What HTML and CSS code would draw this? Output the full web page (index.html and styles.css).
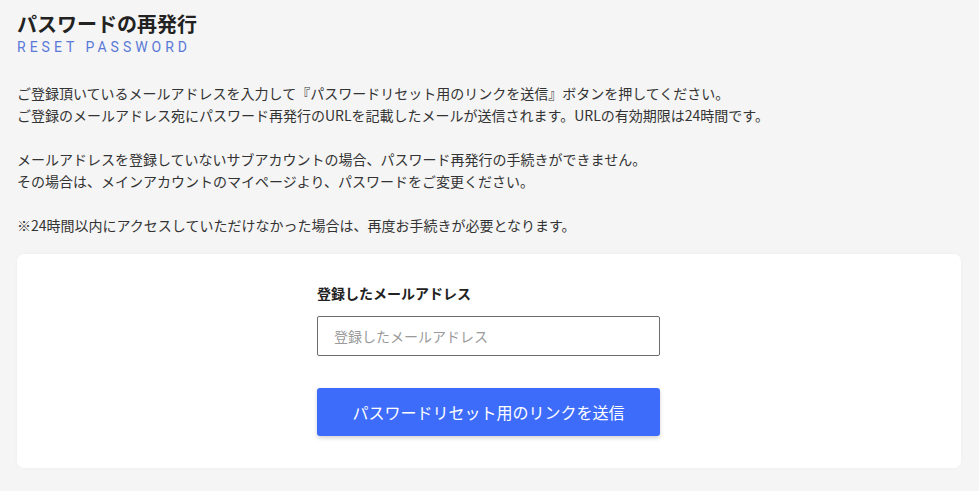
FILE: index.html
```html
<!DOCTYPE html>
<html lang="ja">
<head>
<meta charset="utf-8">
<title>パスワードの再発行</title>
<link rel="stylesheet" href="styles.css">
</head>
<body>
<main class="page">
  <header class="heading">
    <h1 class="title">パスワードの再発行</h1>
    <p class="subtitle">RESET PASSWORD</p>
  </header>
  <section class="intro">
    <p>ご登録頂いているメールアドレスを入力して『パスワードリセット用のリンクを送信』ボタンを押してください。<br>ご登録のメールアドレス宛にパスワード再発行のURLを記載したメールが送信されます。URLの有効期限は24時間です。</p>
    <p>メールアドレスを登録していないサブアカウントの場合、パスワード再発行の手続きができません。<br>その場合は、メインアカウントのマイページより、パスワードをご変更ください。</p>
    <p>※24時間以内にアクセスしていただけなかった場合は、再度お手続きが必要となります。</p>
  </section>
  <section class="card">
    <form class="form">
      <label class="label" for="email">登録したメールアドレス</label>
      <input class="input" id="email" type="email" placeholder="登録したメールアドレス">
      <button class="button" type="button">パスワードリセット用のリンクを送信</button>
    </form>
  </section>
</main>
</body>
</html>
```

FILE: styles.css
```css
html, body {
  margin: 0;
  padding: 0;
  background: #f5f5f5;
}
body {
  font-family: "Noto Sans CJK JP", "Noto Sans", sans-serif;
  color: #333;
  font-size: 14px;
}
.page {
  padding: 10px 18px 23px 17px;
}
.heading {
  margin: 0;
}
.title {
  margin: 0;
  font-size: 20px;
  line-height: 28px;
  font-weight: 700;
  color: #222;
}
.subtitle {
  margin: 0;
  font-family: Roboto, "Noto Sans", sans-serif;
  font-size: 14px;
  line-height: 18px;
  letter-spacing: 4px;
  color: #5a78d8;
}
.intro {
  margin-top: 26px;
}
.intro p {
  margin: 0 0 22px 0;
  line-height: 22px;
  color: #333;
}
.intro p:last-child {
  margin-bottom: 0;
}
.card {
  margin-top: 18px;
  background: #fff;
  border-radius: 7px;
  box-shadow: 0 0 4px rgba(0,0,0,0.03);
  padding: 28px 1px 32px 0;
  display: flex;
  justify-content: center;
}
.form {
  width: 343px;
  display: flex;
  flex-direction: column;
}
.label {
  font-weight: 700;
  font-size: 14px;
  line-height: 22px;
  color: #222;
}
.input {
  margin-top: 12px;
  box-sizing: border-box;
  height: 40px;
  border: 1px solid #6b6b6b;
  border-radius: 2px;
  padding: 0 16px;
  font-family: "Noto Sans CJK JP", sans-serif;
  font-size: 14px;
  color: #333;
  background: #fff;
}
.input::placeholder {
  color: #9a9a9a;
}
.button {
  margin-top: 32px;
  height: 48px;
  border: none;
  border-radius: 3px;
  background: #3e6cfa;
  color: #fff;
  font-family: "Noto Sans CJK JP", sans-serif;
  font-size: 16px;
  box-shadow: 0 2px 4px rgba(0,0,0,0.18);
  cursor: pointer;
}
```
